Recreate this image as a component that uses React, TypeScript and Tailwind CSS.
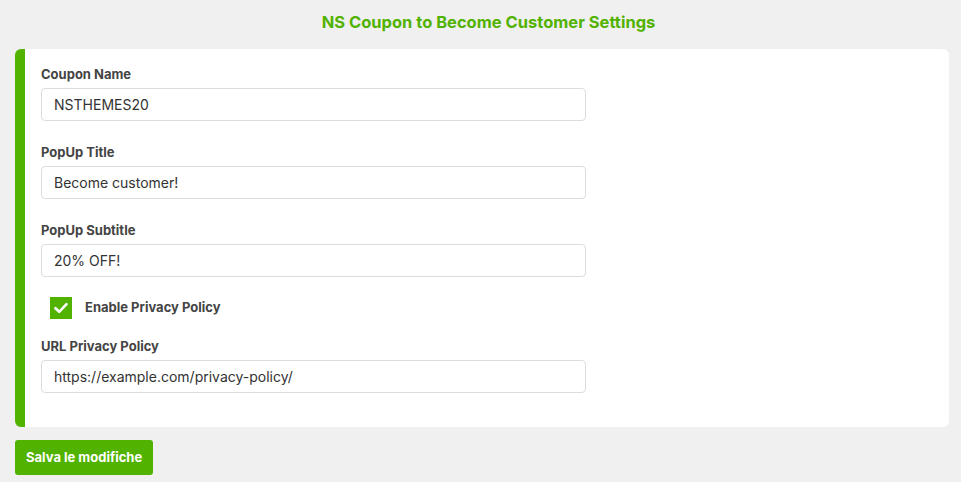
import React, { useState } from 'react';

const Field: React.FunctionComponent<{ label: string; value: string; onChange: (v: string) => void; className?: string }> = (props) => {
    return (
        <div className={props.className}>
            <label className="block text-[13px] leading-[18px] font-bold text-[#444] mb-[5px]">{props.label}</label>
            <input
                value={props.value}
                onChange={(e) => props.onChange(e.target.value)}
                className="block w-[545px] h-[33px] px-3 text-[14px] text-[#333] bg-white border border-[#dcdcdc] rounded-[4px] outline-none"
                type="text"
            />
        </div>
    );
};

const App: React.FunctionComponent = () => {
    const [coupon, setCoupon] = useState<string>("NSTHEMES20");
    const [title, setTitle] = useState<string>("Become customer!");
    const [subtitle, setSubtitle] = useState<string>("20% OFF!");
    const [privacy, setPrivacy] = useState<boolean>(true);
    const [url, setUrl] = useState<string>("https://example.com/privacy-policy/");

    return (
        <div className="min-h-screen bg-[#f0f0f0] px-[15px] pt-[11px] pb-4 font-['Inter',sans-serif]">
            <h1 className="text-center pl-4 text-[16.5px] leading-[22px] font-bold text-[#52b200]">
                NS Coupon to Become Customer Settings
            </h1>
            <div className="mt-4 w-[934px] bg-white rounded-[6px] border-l-[10px] border-[#52b200] pl-4 pt-4 pb-[34px]">
                <Field label="Coupon Name" value={coupon} onChange={setCoupon} />
                <Field label="PopUp Title" value={title} onChange={setTitle} className="mt-[22px]" />
                <Field label="PopUp Subtitle" value={subtitle} onChange={setSubtitle} className="mt-[22px]" />
                <div className="mt-5 flex items-center pl-[9px]">
                    <button
                        type="button"
                        onClick={() => setPrivacy(!privacy)}
                        className={privacy ? "w-[22px] h-[22px] bg-[#52b200] flex items-center justify-center" : "w-[22px] h-[22px] bg-white border border-[#ccc]"}
                    >
                        {privacy && (
                            <svg width="14" height="12" viewBox="0 0 14 12">
                                <path d="M1.5 6.2 L5.2 9.8 L12.5 2.2" fill="none" stroke="white" strokeWidth="2.6" strokeLinecap="round" strokeLinejoin="round" />
                            </svg>
                        )}
                    </button>
                    <span className="ml-[13px] text-[13px] font-bold text-[#444]">Enable Privacy Policy</span>
                </div>
                <Field label="URL Privacy Policy" value={url} onChange={setUrl} className="mt-[18px]" />
            </div>
            <button className="mt-[13px] h-[35px] px-[11px] bg-[#52b200] text-white text-[13px] font-bold rounded-[3px]">
                Salva le modifiche
            </button>
        </div>
    );
};

export default App;
